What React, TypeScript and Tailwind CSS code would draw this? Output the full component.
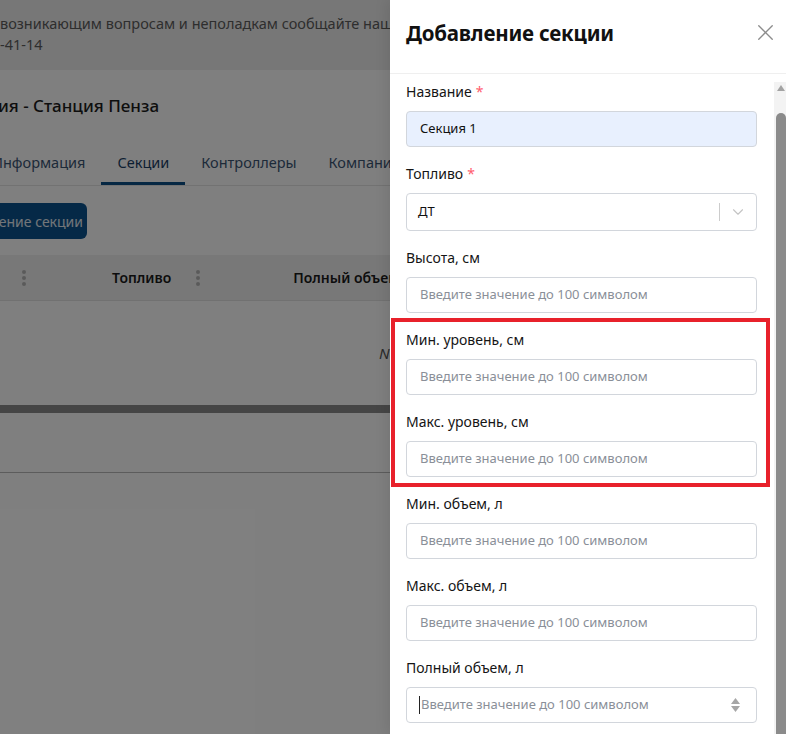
import React from "react";
import { X, ChevronDown } from "lucide-react";

const PLACEHOLDER = "Введите значение до 100 символом";

type Field = {
  label: string;
  required?: boolean;
  kind: "text" | "filled" | "select" | "number";
  value?: string;
};

const fields: Field[] = [
  { label: "Название", required: true, kind: "filled", value: "Секция 1" },
  { label: "Топливо", required: true, kind: "select", value: "ДТ" },
  { label: "Высота, см", kind: "text" },
  { label: "Мин. уровень, см", kind: "text" },
  { label: "Макс. уровень, см", kind: "text" },
  { label: "Мин. объем, л", kind: "text" },
  { label: "Макс. объем, л", kind: "text" },
  { label: "Полный объем, л", kind: "number" },
];

/**
 * Dimmed page behind the drawer
 */
function BackgroundPage() {
  return (
    <div className="absolute inset-0 overflow-hidden bg-white">
      <div className="h-[70px] bg-[#eeeeee] pt-[13px] text-[14.5px] leading-[21px] text-[#5c5c5c] whitespace-nowrap">
        <div>возникающим вопросам и неполадкам сообщайте нашей технической поддержке</div>
        <div>-41-14</div>
      </div>

      <div className="ml-[-2px] mt-[23px] text-[17px] leading-[26px] font-medium text-[#1c1c1c] whitespace-nowrap">
        ия - Станция Пенза
      </div>

      <div className="mt-[21px] border-b border-[#e4e4e4]">
        <div className="flex ml-[-24px] text-[14.5px] whitespace-nowrap">
          <div className="px-4 h-[45px] flex items-center text-[#3a5473]">Информация</div>
          <div className="px-4 h-[45px] flex items-center text-[#1a3f66] border-b-[3px] border-[#0b4f86] pt-[3px]">
            Секции
          </div>
          <div className="px-4 h-[45px] flex items-center text-[#3a5473]">Контроллеры</div>
          <div className="px-4 h-[45px] flex items-center text-[#3a5473]">Компании</div>
        </div>
      </div>

      <div className="mt-[17px] ml-[-64px] w-[151px] h-[36px] rounded-md bg-[#0b538f] flex items-center px-3 text-[14px] text-[#e4ecf3] whitespace-nowrap">
        Добавление секции
      </div>

      <div className="mt-[16px] h-[46px] bg-[#f1f1f1] border-b border-[#e2e2e2] flex items-center text-[14px] font-semibold text-[#1a1a1a] whitespace-nowrap">
        <span className="ml-[22px] flex flex-col gap-[2px]">
          <i className="block w-[4px] h-[4px] rounded-full bg-[#b5b5b5]" />
          <i className="block w-[4px] h-[4px] rounded-full bg-[#b5b5b5]" />
          <i className="block w-[4px] h-[4px] rounded-full bg-[#b5b5b5]" />
        </span>
        <span className="ml-[86px]">Топливо</span>
        <span className="ml-[25px] flex flex-col gap-[2px]">
          <i className="block w-[4px] h-[4px] rounded-full bg-[#b5b5b5]" />
          <i className="block w-[4px] h-[4px] rounded-full bg-[#b5b5b5]" />
          <i className="block w-[4px] h-[4px] rounded-full bg-[#b5b5b5]" />
        </span>
        <span className="ml-[93px]">Полный объем, л</span>
      </div>

      <div className="h-[104px] flex items-center">
        <span className="ml-[379px] text-[15px] italic text-[#555] whitespace-nowrap">No rows</span>
      </div>
      <div className="h-[8px] bg-[#8a8a8a]" />
      <div className="h-[60px] border-b border-[#b8b8b8]" />

      <div className="absolute inset-0 bg-black/50" />
    </div>
  );
}

function FieldInput({ field }: { field: Field }) {
  const base =
    "w-full rounded border border-[#d2d6dc] flex items-center text-[13px] whitespace-nowrap";

  if (field.kind === "filled") {
    return (
      <div className={`${base} h-[36px] bg-[#e8f0fe] pl-[13px] text-[#111]`}>{field.value}</div>
    );
  }

  if (field.kind === "select") {
    return (
      <div className={`${base} h-[38px] bg-white pl-[11px] text-[#111]`}>
        <span className="flex-1">{field.value}</span>
        <span className="w-px h-[18px] bg-[#cccccc]" />
        <span className="w-[36px] flex justify-center">
          <ChevronDown size={18} strokeWidth={1.5} color="#c4c4c4" />
        </span>
      </div>
    );
  }

  if (field.kind === "number") {
    return (
      <div className={`${base} h-[36px] bg-white pl-[12px] text-[#8a8f98]`}>
        <span className="w-px h-[18px] bg-[#222] mr-[1px]" />
        <span className="flex-1">{PLACEHOLDER}</span>
        <span className="flex flex-col items-center gap-[2px] mr-[16px]">
          <svg width="9" height="6" viewBox="0 0 9 6">
            <path d="M4.5 0 L9 6 L0 6 Z" fill="#a6a6a6" />
          </svg>
          <svg width="9" height="6" viewBox="0 0 9 6">
            <path d="M0 0 L9 0 L4.5 6 Z" fill="#a6a6a6" />
          </svg>
        </span>
      </div>
    );
  }

  return <div className={`${base} h-[36px] bg-white pl-[13px] text-[#8a8f98]`}>{PLACEHOLDER}</div>;
}

function Drawer() {
  return (
    <div className="absolute right-0 top-0 w-[396px] h-[734px] bg-white flex flex-col shadow-[-4px_0_12px_rgba(0,0,0,0.08)]">
      <div className="h-[74px] shrink-0 border-b border-[#efefef] flex items-start justify-between pl-4 pr-[7px] pt-[18px]">
        <h2 className="text-[20.5px] leading-[30px] font-bold text-[#111] tracking-[-0.2px]">
          Добавление секции
        </h2>
        <X size={27} strokeWidth={1.2} color="#8c8c8c" className="mt-[1px]" />
      </div>

      <div className="flex flex-1 min-h-0">
        <div className="flex-1 overflow-hidden pl-4 pr-[17px] pt-2 flex flex-col gap-[17px]">
          {fields.map((f) => (
            <div key={f.label} className="flex flex-col gap-[9px]">
              <label className="text-[14px] leading-[20px] text-[#151515]">
                {f.label}
                {f.required && <span className="ml-1 text-[#ff5c6c]">*</span>}
              </label>
              <FieldInput field={f} />
            </div>
          ))}
        </div>

        {/* scrollbar */}
        <div className="w-[12px] mt-2 bg-[#f3f3f3] flex flex-col items-center">
          <svg width="8" height="6" viewBox="0 0 8 6" className="mt-[3px] ml-[2px]">
            <path d="M4 0 L8 6 L0 6 Z" fill="#a3a3a3" />
          </svg>
          <div className="mt-[22px] ml-[2px] w-[10px] flex-1 rounded-t-[5px] bg-[#8b8b8b]" />
        </div>
      </div>
    </div>
  );
}

export default function App() {
  return (
    <div
      className="relative w-[786px] h-[734px] overflow-hidden"
      style={{ fontFamily: '"Noto Sans", "Open Sans", sans-serif' }}
    >
      <BackgroundPage />
      <Drawer />
      {/* annotation frame */}
      <div className="absolute left-[391px] top-[318px] w-[379px] h-[169px] border-4 border-[#e8212b]" />
    </div>
  );
}
